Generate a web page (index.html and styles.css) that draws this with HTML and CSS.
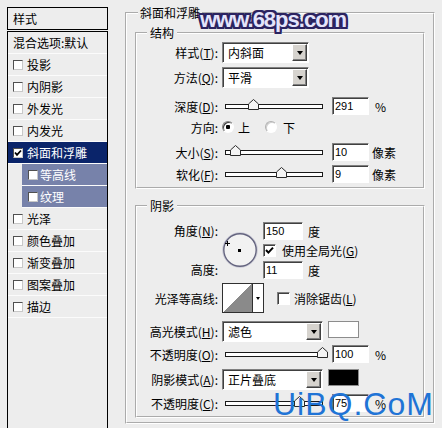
FILE: index.html
```html
<!DOCTYPE html>
<html lang="zh-CN">
  <head>
    <meta charset="UTF-8" />
    <meta name="viewport" content="width=device-width, initial-scale=1.0" />
    <title>图层样式</title>
    <link rel="stylesheet" href="styles.css">
  </head>
  <body>
    <div class="dialog">
      <div class="styles">
        <div class="styles-head">样式</div>
        <ul class="styles-list">
          <li class="item">混合选项:默认</li>
          <li class="item"><span class="box"></span>投影</li>
          <li class="item"><span class="box"></span>内阴影</li>
          <li class="item"><span class="box"></span>外发光</li>
          <li class="item"><span class="box"></span>内发光</li>
          <li class="item selected">
            <span class="box">
              <svg viewBox="0 0 8 8" width="8" height="8"><path d="M1 3.5 L3 5.8 L7 1.5" stroke="#000" stroke-width="1.8" fill="none" /></svg>
            </span>斜面和浮雕
          </li>
          <li class="item sub"><span class="box"></span>等高线</li>
          <li class="item sub"><span class="box"></span>纹理</li>
          <li class="item"><span class="box"></span>光泽</li>
          <li class="item"><span class="box"></span>颜色叠加</li>
          <li class="item"><span class="box"></span>渐变叠加</li>
          <li class="item"><span class="box"></span>图案叠加</li>
          <li class="item"><span class="box"></span>描边</li>
        </ul>
      </div>

      <fieldset class="group effect">
        <legend>斜面和浮雕</legend>

        <fieldset class="group section">
          <legend>结构</legend>
          <div class="row row-select first">
            <label class="label">样式(<u>T</u>):</label>
            <div class="select"><span>内斜面</span><i class="select-btn"></i></div>
          </div>
          <div class="row row-select">
            <label class="label">方法(<u>Q</u>):</label>
            <div class="select"><span>平滑</span><i class="select-btn"></i></div>
          </div>
          <div class="row gap-lg">
            <label class="label">深度(<u>D</u>):</label>
            <div class="slider"><div class="track"></div><svg class="thumb" style="left: 29%" viewBox="0 0 11 11"><polygon points="0.5,10.5 0.5,5 5.5,0.5 10.5,5 10.5,10.5" /></svg></div>
            <input class="field" type="text" value="291" readonly />
            <span class="unit">%</span>
          </div>
          <div class="row gap-sm">
            <label class="label">方向:</label>
            <span class="radio checked"></span><span class="radio-text">上</span>
            <span class="radio off"></span><span class="radio-text">下</span>
          </div>
          <div class="row gap-md">
            <label class="label">大小(<u>S</u>):</label>
            <div class="slider"><div class="track"></div><svg class="thumb" style="left: 10%" viewBox="0 0 11 11"><polygon points="0.5,10.5 0.5,5 5.5,0.5 10.5,5 10.5,10.5" /></svg></div>
            <input class="field" type="text" value="10" readonly />
            <span class="unit unit-px">像素</span>
          </div>
          <div class="row">
            <label class="label">软化(<u>F</u>):</label>
            <div class="slider"><div class="track"></div><svg class="thumb" style="left: 57%" viewBox="0 0 11 11"><polygon points="0.5,10.5 0.5,5 5.5,0.5 10.5,5 10.5,10.5" /></svg></div>
            <input class="field" type="text" value="9" readonly />
            <span class="unit unit-px">像素</span>
          </div>
        </fieldset>

        <fieldset class="group section shadow">
          <legend>阴影</legend>
          <div class="angle">
            <div class="angle-labels">
              <label>角度(<u>N</u>):</label>
              <label>高度:</label>
            </div>
            <svg class="dial" width="36" height="36" viewBox="0 0 36 36">
              <circle cx="18" cy="18" r="17.3" fill="none" stroke="#c9c9d6" stroke-width="1" />
              <circle cx="18" cy="18" r="16.2" fill="#f2f2f2" stroke="#63637e" stroke-width="1.4" />
              <path d="M3 11.5h5M5.5 9v5" stroke="#000" stroke-width="1" />
              <rect x="16" y="17" width="3" height="3" fill="#000" />
            </svg>
            <div class="angle-fields">
              <div class="field-row">
                <input class="field field-wide" type="text" value="150" readonly />
                <span class="unit">度</span>
              </div>
              <div class="check-row">
                <span class="checkbox">
                  <svg viewBox="0 0 9 9" width="9" height="9"><path d="M1 4 L3.4 6.6 L8 1.6" stroke="#000" stroke-width="2" fill="none" /></svg>
                </span>使用全局光(<u>G</u>)
              </div>
              <div class="field-row">
                <input class="field field-wide" type="text" value="11" readonly />
                <span class="unit">度</span>
              </div>
            </div>
          </div>
          <div class="row row-contour">
            <label class="label">光泽等高线:</label>
            <div class="contour"><div class="curve"></div><i class="contour-btn"></i></div>
            <span class="checkbox checkbox-spaced"></span>消除锯齿(<u>L</u>)
          </div>
          <div class="row row-select gap-lg">
            <label class="label">高光模式(<u>H</u>):</label>
            <div class="select select-wide"><span>滤色</span><i class="select-btn"></i></div>
            <span class="swatch swatch-white"></span>
          </div>
          <div class="row gap-xs">
            <label class="label">不透明度(<u>O</u>):</label>
            <div class="slider"><div class="track"></div><svg class="thumb" style="left: 99%" viewBox="0 0 11 11"><polygon points="0.5,10.5 0.5,5 5.5,0.5 10.5,5 10.5,10.5" /></svg></div>
            <input class="field" type="text" value="100" readonly />
            <span class="unit">%</span>
          </div>
          <div class="row row-select gap-md">
            <label class="label">阴影模式(<u>A</u>):</label>
            <div class="select select-wide"><span>正片叠底</span><i class="select-btn"></i></div>
            <span class="swatch swatch-black"></span>
          </div>
          <div class="row">
            <label class="label">不透明度(<u>C</u>):</label>
            <div class="slider"><div class="track"></div><svg class="thumb" style="left: 75%" viewBox="0 0 11 11"><polygon points="0.5,10.5 0.5,5 5.5,0.5 10.5,5 10.5,10.5" /></svg></div>
            <input class="field" type="text" value="75" readonly />
            <span class="unit">%</span>
          </div>
        </fieldset>
      </fieldset>
    </div>

    <div class="mark-top">www.68ps.com</div>
    <div class="mark-bottom">UiBQ.CoM</div>
  </body>
</html>
```

FILE: styles.css
```css
body {
  margin: 0;
  width: 442px;
  height: 428px;
  overflow: hidden;
  position: relative;
  background-color: #ededed;
  font-family: "Noto Sans CJK SC", sans-serif;
  font-size: 12px;
  color: #000;
}

u {
  text-underline-offset: 1px;
}

.dialog {
  display: flex;
  align-items: flex-start;
}

/* style list on the left */
.styles {
  margin: 7px 0 0 7px;
  width: 101px;
  height: 421px;
  display: flex;
  flex-direction: column;
}

.styles-head {
  height: 21px;
  line-height: 21px;
  border: 1px solid #000;
  padding-left: 5px;
}

.styles-list {
  flex: 1;
  list-style: none;
  margin: 1px 0 0;
  padding: 0;
  border: 1px solid #000;
  border-bottom: none;
}

.item {
  height: 21px;
  line-height: 21px;
  display: flex;
  align-items: center;
  padding-left: 5px;
  border-bottom: 1px solid #fbfbfb;
  white-space: nowrap;
}

.item .box {
  width: 8px;
  height: 8px;
  margin-right: 4px;
  display: flex;
  align-items: center;
  justify-content: center;
  background: #fff;
  border: 1px solid;
  border-color: #505050 #c8c8c8 #c8c8c8 #505050;
}

.item.selected {
  background-color: #0a246a;
  color: #fff;
}

.item.sub {
  margin-left: 14px;
  padding-left: 6px;
  background-color: #7782aa;
  color: #fff;
}

.item.sub .box {
  margin-right: 2px;
}

/* group boxes */
.group {
  margin: 0;
  padding: 0;
  min-width: 0;
  border: 2px groove #fff;
}

.group legend {
  margin-left: 10px;
  padding: 0 3px;
  line-height: 14px;
}

.effect {
  margin: 6px 0 0 17px;
  width: 310px;
  box-sizing: border-box;
  padding: 0 8px 4px;
}

.effect > legend {
  margin-left: 3px;
  padding: 0 2px;
}

.section {
  margin-top: 6px;
  padding-bottom: 4px;
}

.shadow {
  margin-top: 10px;
}

/* rows */
.row {
  display: flex;
  align-items: center;
  height: 18px;
  margin-top: 4px;
  white-space: nowrap;
}

.row.first {
  margin-top: 2px;
}

.row-select {
  height: 21px;
}

.gap-xs {
  margin-top: 3px;
}

.gap-sm {
  margin-top: 3px;
}

.gap-md {
  margin-top: 7px;
}

.gap-lg {
  margin-top: 9px;
}

.row-select.gap-md {
  margin-top: 6px;
}

.row-select.gap-lg {
  margin-top: 8px;
}

.label {
  width: 81px;
  flex: none;
  margin-right: 4px;
  text-align: right;
}

/* dropdowns */
.select {
  width: 87px;
  height: 21px;
  box-sizing: border-box;
  display: flex;
  padding: 1px;
  background: #fff;
  border: 1px solid;
  border-color: #808080 #fff #fff #808080;
  box-shadow: inset 1px 1px 0 #404040;
}

.select-wide {
  width: 101px;
}

.select span {
  flex: 1;
  padding-left: 4px;
  line-height: 17px;
}

.select-btn {
  width: 15px;
  box-sizing: border-box;
  display: flex;
  align-items: center;
  justify-content: center;
  background: #d6d3ce;
  border: 1px solid;
  border-color: #fff #404040 #404040 #fff;
  box-shadow: inset -1px -1px 0 #808080;
}

.select-btn::after {
  content: "";
  border-left: 3.5px solid transparent;
  border-right: 3.5px solid transparent;
  border-top: 4px solid #000;
}

/* sliders */
.slider {
  width: 98px;
  height: 18px;
  margin: 0 9px 0 3px;
  position: relative;
  display: flex;
  align-items: center;
}

.track {
  flex: 1;
  height: 3px;
  background: #fff;
  border: 1px solid #1a1a1a;
}

.thumb {
  position: absolute;
  top: 2px;
  width: 11px;
  height: 11px;
  margin-left: -5px;
}

.thumb polygon {
  fill: #f4f4f4;
  stroke: #2a2a2a;
  stroke-width: 1;
}

/* text fields */
.field {
  width: 37px;
  height: 18px;
  box-sizing: border-box;
  margin: 0 6px 0 0;
  padding: 0 0 0 2px;
  font: 11px "Liberation Sans", sans-serif;
  color: #000;
  background: #fff;
  border: 1px solid;
  border-color: #808080 #fff #fff #808080;
  box-shadow: inset 1px 1px 0 #404040;
  outline: none;
}

.field-wide {
  width: 40px;
  margin-right: 5px;
}

.unit-px {
  margin-left: -3px;
}

/* radios and checkboxes */
.radio {
  width: 12px;
  height: 12px;
  box-sizing: border-box;
  border-radius: 50%;
  background: #fff;
  border: 1px solid;
  border-color: #808080 #fff #fff #808080;
  box-shadow: inset 1px 1px 0 #404040;
}

.radio.checked {
  background: radial-gradient(circle, #000 0 2px, #fff 2.5px);
}

.radio.off {
  margin-left: 15px;
  border-color: #b0b0b0 #fff #fff #b0b0b0;
  box-shadow: inset 1px 1px 0 #d0d0d0;
}

.radio-text {
  margin-left: 4px;
}

.radio.off + .radio-text {
  margin-left: 6px;
}

.checkbox {
  width: 13px;
  height: 13px;
  box-sizing: border-box;
  margin-right: 6px;
  display: flex;
  align-items: center;
  justify-content: center;
  background: #fff;
  border: 1px solid;
  border-color: #808080 #fff #fff #808080;
  box-shadow: inset 1px 1px 0 #404040;
}

.checkbox-spaced {
  margin-left: 13px;
  margin-right: 4px;
}

/* angle block */
.angle {
  display: flex;
  margin-top: 9px;
}

.angle-labels {
  width: 81px;
  margin-right: 4px;
  display: flex;
  flex-direction: column;
  justify-content: space-between;
  text-align: right;
  line-height: 18px;
}

.dial {
  flex: none;
  margin: 10px 5px 0 0;
}

.angle-fields {
  display: flex;
  flex-direction: column;
}

.field-row {
  display: flex;
  align-items: center;
  height: 18px;
}

.check-row {
  display: flex;
  align-items: center;
  height: 21px;
}

/* gloss contour */
.row-contour {
  height: 30px;
}

.contour {
  width: 42px;
  height: 30px;
  box-sizing: border-box;
  display: flex;
  border: 1px solid #303030;
  background: #fff;
}

.curve {
  flex: 1;
  background: linear-gradient(to top left, #8a8a8a 50%, #fff 50%);
  border-right: 1px solid #303030;
}

.contour-btn {
  width: 10px;
  display: flex;
  align-items: center;
  justify-content: center;
}

.contour-btn::after {
  content: "";
  border-left: 2.5px solid transparent;
  border-right: 2.5px solid transparent;
  border-top: 3px solid #000;
}

.swatch {
  align-self: flex-start;
  width: 31px;
  height: 17px;
  box-sizing: border-box;
  margin-left: 5px;
  border: 1px solid #8c8c8c;
}

.swatch-white {
  background: #fff;
}

.swatch-black {
  background: #000;
}

/* site watermarks */
.mark-top {
  position: absolute;
  left: 200px;
  top: 9px;
  font: bold 22px/22px "Liberation Sans", sans-serif;
  letter-spacing: -1px;
  color: #e4e4fb;
  text-shadow:
    2px 0 0 #2b2360, -2px 0 0 #2b2360, 0 2px 0 #2b2360, 0 -2px 0 #2b2360,
    2px 2px 0 #2b2360, -2px -2px 0 #2b2360, 2px -2px 0 #2b2360, -2px 2px 0 #2b2360,
    1px 0 0 #2b2360, 0 1px 0 #2b2360;
}

.mark-bottom {
  position: absolute;
  left: 273px;
  top: 388px;
  font: 32px/32px "Liberation Sans", sans-serif;
  letter-spacing: 1px;
  color: #1f74d6;
}
```
